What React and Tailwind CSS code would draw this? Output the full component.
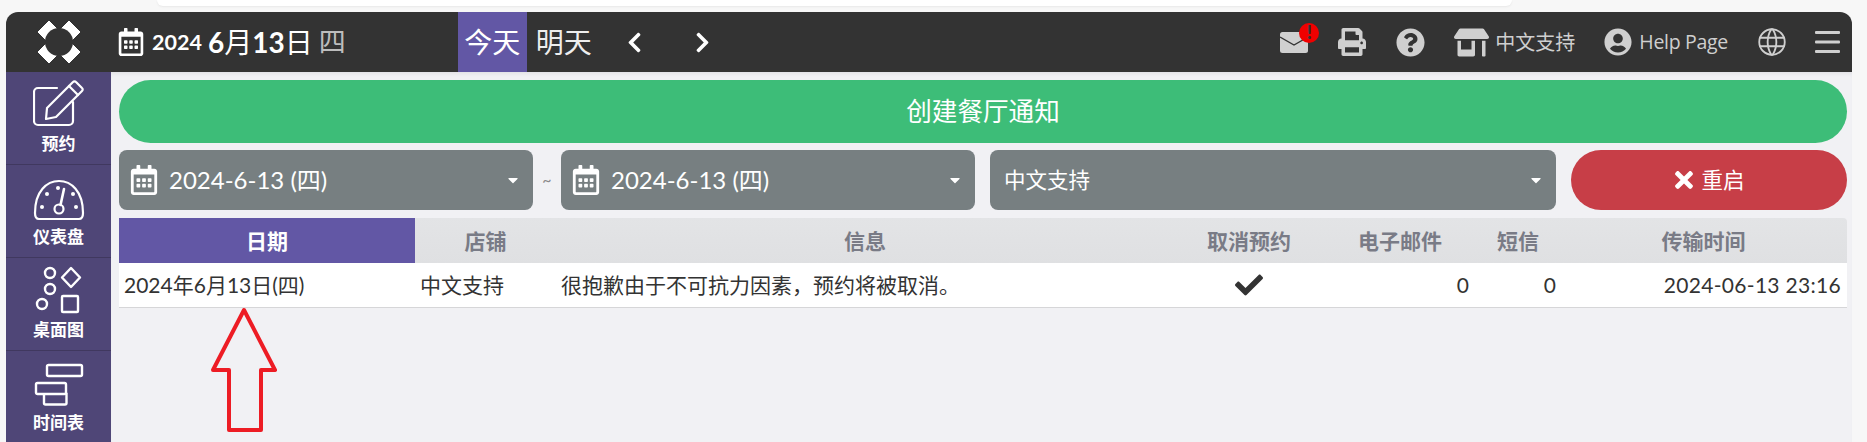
import React from "react";
import { FaPrint, FaQuestionCircle, FaStoreAlt, FaUserCircle, FaChevronLeft, FaChevronRight, FaRegCalendarAlt, FaCheck, FaTimes, FaCaretDown } from "react-icons/fa";
import { TbWorld } from "react-icons/tb";

function Logo() {
  return (
    <svg width="44" height="44" viewBox="0 0 44 44">
      <g fill="#fff" stroke="#fff" strokeWidth="1" strokeLinejoin="round">
        <path d="M12 1 L1 12 L10 21 L21 10 Z" />
        <path d="M32 1 L43 12 L34 21 L23 10 Z" />
        <path d="M12 43 L1 32 L10 23 L21 34 Z" />
        <path d="M32 43 L43 32 L34 23 L23 34 Z" />
      </g>
      <circle cx="22" cy="22" r="14" fill="#333333" />
    </svg>
  );
}

function Pencil() {
  return (
    <svg width="52" height="48" viewBox="12 8 52 48" fill="none" stroke="#fff" strokeWidth="2.2" strokeLinejoin="round" strokeLinecap="round">
      <path d="M36 16 H17 a4 4 0 0 0 -4 4 V49 a4 4 0 0 0 4 4 H48 a4 4 0 0 0 4 -4 V30" />
      <path d="M25 47 L26 36 L52 10 a2 2 0 0 1 3 0 L61 16 a2 2 0 0 1 0 3 L35 45 Z" />
      <path d="M48 14 L57 23" />
    </svg>
  );
}

function Gauge() {
  return (
    <svg width="52" height="42" viewBox="0 0 52 42" fill="none" stroke="#fff" strokeWidth="2.2">
      <path d="M6 40 Q2 40 2 34 C2 12 14 2 26 2 C38 2 50 12 50 34 Q50 40 46 40 Z" strokeLinejoin="round" />
      <circle cx="26" cy="30" r="4.5" />
      <path d="M27.5 26 L31 10" strokeLinecap="round" strokeWidth="2.6" />
      <g fill="#fff" stroke="none">
        <circle cx="9" cy="28" r="2" /><circle cx="43" cy="28" r="2" />
        <circle cx="14" cy="15" r="2" /><circle cx="40" cy="15" r="2" /><circle cx="25" cy="9" r="2" />
      </g>
    </svg>
  );
}

function Shapes() {
  return (
    <svg width="48" height="48" viewBox="0 0 48 48" fill="none" stroke="#fff" strokeWidth="2.4">
      <circle cx="15" cy="7" r="5" />
      <circle cx="15" cy="23" r="5" />
      <circle cx="7" cy="38" r="5" />
      <path d="M36 2 L45 11.5 L36 21 L27 11.5 Z" strokeLinejoin="round" />
      <rect x="27" y="30" width="16" height="16" rx="1" />
    </svg>
  );
}

function Schedule() {
  return (
    <svg width="50" height="44" viewBox="0 0 50 44" fill="none" stroke="#fff" strokeWidth="2.4">
      <rect x="13" y="2" width="35" height="11" rx="1.5" />
      <rect x="2" y="20" width="30" height="11" rx="1.5" />
      <path d="M10 31 V40 a1.5 1.5 0 0 0 1.5 1.5 H31 a1.5 1.5 0 0 0 1.5 -1.5 V31 H32" />
    </svg>
  );
}

function Mail() {
  return (
    <svg width="28" height="21" viewBox="0 0 28 21" className="block">
      <rect width="28" height="21" rx="2.5" fill="#d0d0d0" />
      <path d="M0 5 L14 13 L28 5" fill="none" stroke="#333333" strokeWidth="1.4" />
    </svg>
  );
}

function Bars() {
  return (
    <svg width="25" height="22" viewBox="0 0 25 22" fill="#cfcfcf">
      <rect y="0" width="25" height="3" rx="1" />
      <rect y="9.5" width="25" height="3" rx="1" />
      <rect y="19" width="25" height="3" rx="1" />
    </svg>
  );
}

function SideItem({ icon, label }) {
  return (
    <div className="h-[93px] flex flex-col items-center shrink-0 border-b border-[#40385f]">
      <div className="h-[56px] flex items-end justify-center">{icon}</div>
      <div className="mt-[5px] text-[17px] leading-[22px] font-bold text-white">{label}</div>
    </div>
  );
}

function DateSelect() {
  return (
    <div className="w-[414px] h-[60px] rounded-[8px] bg-[#777f81] flex items-center pl-[10px] pr-[12px] text-white text-[24px]">
      <FaRegCalendarAlt className="text-[30px] mr-[10px]" />
      <span>2024-6-13 (四)</span>
      <FaCaretDown className="ml-auto text-[16px]" />
    </div>
  );
}

export default function App() {
  const cols = "grid grid-cols-[296px_141px_618px_150px_152px_84px_1fr] h-[45px]";
  return (
    <div
      className="relative h-[442px] w-[1867px] overflow-hidden bg-[#f7f7f7]"
      style={{ fontFamily: 'Lato, "Noto Sans CJK SC", sans-serif' }}
    >
      <div className="h-[12px]">
        <div className="ml-[157px] w-[1355px] h-[6px] bg-white rounded-b-[16px] shadow-[0_1px_2px_#e8e8e8]" />
      </div>
      <div className="ml-[6px] w-[1846px] h-[430px] flex flex-col">
        <header className="h-[60px] shrink-0 bg-[#333333] rounded-t-[12px] flex items-center text-[#cfcfcf]">
          <div className="w-[106px] flex justify-center shrink-0"><Logo /></div>
          <FaRegCalendarAlt className="text-white text-[28px] ml-[5px]" />
          <span className="ml-[7px] text-[21.5px] font-bold text-white">2024</span>
          <span className="ml-[6px] text-[28px] text-white"><b>6</b>月<b>13</b>日</span>
          <span className="ml-[6px] text-[27px] text-[#bdbdbd]">四</span>
          <div className="ml-[112px] h-full w-[69px] bg-[#6257a5] text-white text-[28px] flex items-center justify-center">今天</div>
          <div className="ml-[9px] text-[28px] text-[#eeeeee]">明天</div>
          <FaChevronLeft className="ml-[31px] text-white text-[23px]" />
          <FaChevronRight className="ml-[45px] text-white text-[23px]" />
          <div className="ml-auto flex items-center text-[#cfcfcf]">
            <div className="relative">
              <Mail />
              <span className="absolute -top-[9px] -right-[11px] w-[20px] h-[20px] rounded-full bg-[#f00000] text-[#333333] text-[18px] font-black flex items-center justify-center">!</span>
            </div>
            <FaPrint className="ml-[30px] text-[28px]" />
            <FaQuestionCircle className="ml-[30px] text-[29px]" />
            <FaStoreAlt className="ml-[29px] text-[35px]" />
            <span className="ml-[6px] text-[20px]">中文支持</span>
            <FaUserCircle className="ml-[29px] text-[28px]" />
            <span className="ml-[7px] text-[19.5px]" style={{ fontFamily: '"Open Sans", sans-serif', letterSpacing: "-0.3px" }}>Help Page</span>
            <TbWorld className="ml-[27px] text-[34px]" strokeWidth={1.3} />
            <div className="ml-[26px] mr-[12px]"><Bars /></div>
          </div>
        </header>
        <div className="flex flex-1 min-h-0">
          <aside className="w-[105px] shrink-0 bg-[#4f4677] flex flex-col overflow-hidden">
            <SideItem icon={<Pencil />} label="预约" />
            <SideItem icon={<Gauge />} label="仪表盘" />
            <SideItem icon={<Shapes />} label="桌面图" />
            <SideItem icon={<Schedule />} label="时间表" />
          </aside>
          <main className="flex-1 bg-[#f1f1f4] pl-[8px] pr-[5px] pt-[8px] flex flex-col gap-[7px] shadow-[inset_0_4px_4px_-3px_#dcdce0]">
            <button className="h-[63px] shrink-0 rounded-full bg-[#3dbd78] text-white text-[25.6px] flex items-center justify-center">创建餐厅通知</button>
            <div className="flex items-center h-[60px] shrink-0">
              <DateSelect />
              <span className="w-[28px] text-center text-[#888] text-[16px]">~</span>
              <DateSelect />
              <div className="ml-[15px] w-[566px] h-[60px] rounded-[8px] bg-[#777f81] flex items-center pl-[14px] pr-[12px] text-white text-[21.5px]">
                <span>中文支持</span>
                <FaCaretDown className="ml-auto text-[16px]" />
              </div>
              <button className="ml-[15px] flex-1 h-[60px] rounded-full bg-[#c73e47] text-white text-[21.5px] flex items-center justify-center">
                <FaTimes className="text-[26px] mr-[4px] -ml-[2px]" />重启
              </button>
            </div>
            <div className="mt-[1px]">
              <div className={`${cols} items-stretch rounded-tr-[4px] overflow-hidden bg-gradient-to-b from-[#e3e4e6] to-[#dfe0e2] text-[21px] font-bold text-[#797b86] text-center`}>
                <div className="bg-[#6257a5] text-white flex items-center justify-center">日期</div>
                <div className="flex items-center justify-center">店铺</div>
                <div className="flex items-center justify-center">信息</div>
                <div className="flex items-center justify-center">取消预约</div>
                <div className="flex items-center justify-center">电子邮件</div>
                <div className="flex items-center justify-center">短信</div>
                <div className="flex items-center justify-center">传输时间</div>
              </div>
              <div className={`${cols} items-center bg-white border-b border-[#d6d6d8] text-[21px] text-[#333]`}>
                <div className="pl-[5px]">2024年6月13日(四)</div>
                <div className="pl-[5px]">中文支持</div>
                <div className="pl-[5px]">很抱歉由于不可抗力因素，预约将被取消。</div>
                <div className="flex justify-center"><FaCheck className="text-[28px]" /></div>
                <div className="text-right pr-[7px]">0</div>
                <div className="text-right pr-[4px]">0</div>
                <div className="text-right pr-[6px] tracking-[0.3px]">2024-06-13 23:16</div>
              </div>
            </div>
          </main>
        </div>
      </div>
      <svg className="absolute left-[210px] top-[307px]" width="70" height="126" viewBox="0 0 70 126" fill="none">
        <path d="M34 3 L65 63 H51 V123 H19 V63 H3 Z" stroke="#ed1c24" strokeWidth="4" strokeLinejoin="round" />
      </svg>
    </div>
  );
}
